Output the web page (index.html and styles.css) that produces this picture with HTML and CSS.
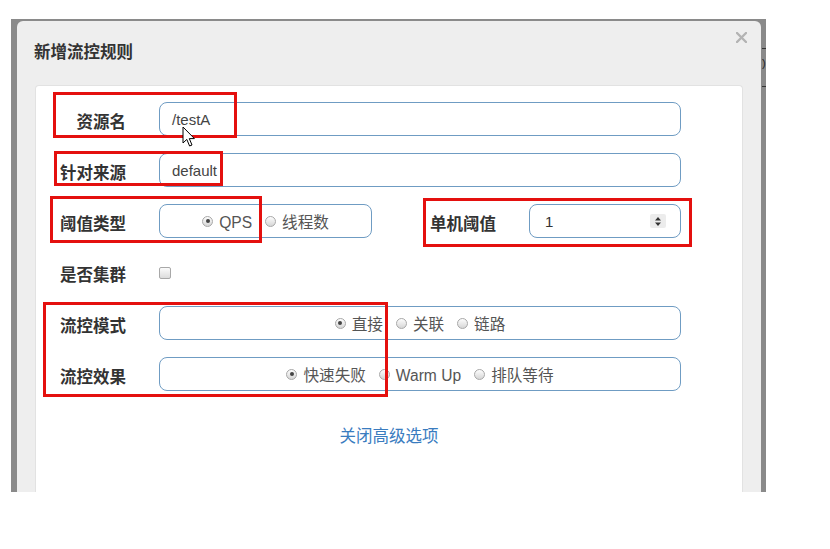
FILE: index.html
```html
<!DOCTYPE html>
<html lang="zh">
<head>
<meta charset="utf-8">
<title>新增流控规则</title>
<link rel="stylesheet" href="styles.css">
</head>
<body>
<div class="stage">
  <div class="modal">
    <div class="modal-header">
      <h4 class="modal-title">新增流控规则</h4>
      <button class="close" type="button" aria-label="关闭">
        <svg width="11" height="11" viewBox="0 0 11 11"><path d="M1 1 L10 10 M10 1 L1 10" stroke="#b3b3b3" stroke-width="2.4" stroke-linecap="round"/></svg>
      </button>
    </div>
    <div class="panel">
      <div class="form">
        <div class="row">
          <span class="lbl">资源名</span>
          <div class="box">/testA</div>
        </div>
        <div class="row">
          <span class="lbl">针对来源</span>
          <div class="box">default</div>
        </div>
        <div class="row">
          <span class="lbl">阈值类型</span>
          <div class="box grp center">
            <span class="opt first"><span class="radio on"></span><span class="lat">QPS</span></span>
            <span class="opt"><span class="radio"></span>线程数</span>
          </div>
          <span class="lbl wide">单机阈值</span>
          <div class="box num">
            <span>1</span>
            <span class="spin">
              <svg width="8" height="11" viewBox="0 0 8 11"><path d="M4 1 L7 4.5 L1 4.5 Z M4 10 L7 6.5 L1 6.5 Z" fill="#333"/></svg>
            </span>
          </div>
        </div>
        <div class="row">
          <span class="lbl">是否集群</span>
          <span class="chk"></span>
        </div>
        <div class="row">
          <span class="lbl">流控模式</span>
          <div class="box center">
            <span class="opt first"><span class="radio on"></span>直接</span>
            <span class="opt"><span class="radio"></span>关联</span>
            <span class="opt"><span class="radio"></span>链路</span>
          </div>
        </div>
        <div class="row">
          <span class="lbl">流控效果</span>
          <div class="box center">
            <span class="opt first"><span class="radio on"></span>快速失败</span>
            <span class="opt"><span class="radio"></span><span class="lat">Warm Up</span></span>
            <span class="opt"><span class="radio"></span>排队等待</span>
          </div>
        </div>
      </div>
      <div class="more"><a href="#">关闭高级选项</a></div>
    </div>
  </div>
</div>

<div class="bg-mark m1"></div>
<div class="bg-mark m2">)</div>
<div class="bg-mark m3"></div>

<div class="annot a1"></div>
<div class="annot a2"></div>
<div class="annot a3"></div>
<div class="annot a4"></div>
<div class="annot a5"></div>

<svg class="cursor" width="14" height="22" viewBox="0 0 14 22">
  <path d="M1 1 L1 17 L4.8 13.4 L7.6 20 L10 19 L7.3 12.6 L12.4 12.6 Z" fill="#fff" stroke="#000" stroke-width="1" stroke-linejoin="round"/>
</svg>
</body>
</html>
```
FILE: styles.css
```css
body {
  margin: 0;
  width: 830px;
  height: 549px;
  overflow: hidden;
  position: relative;
  background: #fff;
  font-family: "Liberation Sans", "Noto Sans CJK SC", sans-serif;
}

.stage {
  margin: 19px 0 0 11px;
  width: 755px;
  height: 473px;
  box-sizing: border-box;
  padding: 2px 5px 0 6px;
  background: #8a8a8a;
  overflow: hidden;
}

.modal {
  height: 100%;
  background: #eeeeee;
  border-radius: 6px 6px 0 0;
  display: flex;
  flex-direction: column;
}

.modal-header {
  display: flex;
  justify-content: space-between;
  align-items: flex-start;
  padding: 19px 14px 23px 17px;
}

.modal-title {
  margin: 0;
  font-family: "Noto Sans CJK SC", sans-serif;
  font-weight: bold;
  font-size: 16.5px;
  line-height: 22px;
  color: #333;
}

.close {
  border: 0;
  background: none;
  padding: 0;
  margin-top: -8px;
  width: 11px;
  height: 11px;
  display: block;
}

.close svg {
  display: block;
}

.panel {
  flex: 1;
  margin: 0 18px;
  background: #fff;
  border: 1px solid #e2e2e2;
  border-bottom: 0;
  border-radius: 4px 4px 0 0;
  padding-top: 16px;
}

.form {
  padding: 0 61px 0 20px;
}

.row {
  display: flex;
  align-items: center;
  height: 34px;
  margin-bottom: 17px;
}

.lbl {
  flex: 0 0 70px;
  margin-right: 33px;
  text-align: right;
  white-space: nowrap;
  font-family: "Noto Sans CJK SC", sans-serif;
  font-weight: bold;
  font-size: 16.5px;
  color: #333;
  padding-top: 3px;
}

.lbl.wide {
  flex-basis: 124px;
}

.box {
  flex: 1;
  height: 34px;
  box-sizing: border-box;
  border: 1px solid #6f9cc3;
  border-radius: 8px;
  display: flex;
  align-items: center;
  padding: 0 12px;
  font-size: 15px;
  color: #444;
  white-space: nowrap;
}

.box.center {
  justify-content: center;
}

.box.grp {
  flex: 0 0 213px;
}

.box.num {
  flex: 0 0 152px;
  justify-content: space-between;
  padding: 0 14px 0 15px;
  color: #333;
}

.spin {
  width: 16px;
  height: 14px;
  background: #ececec;
  border-radius: 2px;
  display: flex;
  align-items: center;
  justify-content: center;
}

.spin svg {
  display: block;
}

.opt {
  display: inline-flex;
  align-items: center;
  margin-left: 13px;
  color: #555;
  font-size: 15.6px;
}

.opt.first {
  margin-left: 0;
}

.lat {
  padding-top: 3px;
}

.radio {
  width: 11px;
  height: 11px;
  box-sizing: border-box;
  border-radius: 50%;
  border: 1px solid #a8a8a8;
  background: linear-gradient(#fdfdfd, #d6d6d6);
  margin-right: 6px;
  position: relative;
  flex: 0 0 auto;
}

.radio.on::after {
  content: "";
  position: absolute;
  left: 2.5px;
  top: 2.5px;
  width: 4px;
  height: 4px;
  border-radius: 50%;
  background: #444;
}

.chk {
  width: 12px;
  height: 12px;
  box-sizing: border-box;
  border: 1px solid #a8a8a8;
  border-radius: 2px;
  background: linear-gradient(#fbfbfb, #dcdcdc);
  margin-top: 2px;
}

.more {
  text-align: center;
  margin-top: 33px;
  line-height: 22px;
}

.more a {
  font-family: "Noto Sans CJK SC", sans-serif;
  font-size: 16.5px;
  color: #3a7cbf;
  text-decoration: none;
}

.bg-mark {
  position: absolute;
  left: 762px;
  width: 4px;
  background: #333;
}

.m1 { top: 48px; height: 1px; }
.m3 { top: 86px; height: 1px; }
.m2 {
  top: 56px;
  height: 14px;
  background: none;
  color: #222;
  font-size: 11px;
  line-height: 14px;
  overflow: hidden;
}

.annot {
  position: absolute;
  box-sizing: border-box;
  border: 3px solid #e4100e;
}

.a1 { left: 53px; top: 92px; width: 184px; height: 46px; }
.a2 { left: 54px; top: 151px; width: 169px; height: 35px; }
.a3 { left: 50px; top: 196px; width: 212px; height: 47px; }
.a4 { left: 423px; top: 198px; width: 269px; height: 49px; }
.a5 { left: 43px; top: 302px; width: 345px; height: 95px; }

.cursor {
  position: absolute;
  left: 182px;
  top: 126px;
}
```
